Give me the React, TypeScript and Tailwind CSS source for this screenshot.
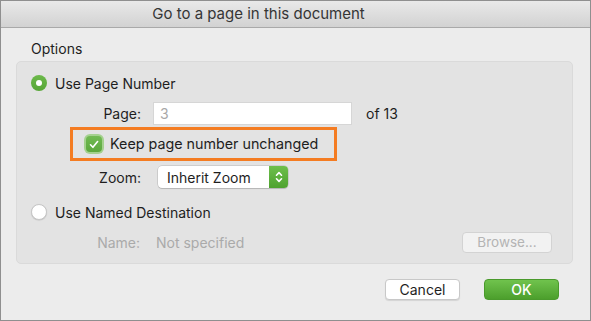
import React from 'react'

const font = { fontFamily: 'Inter, "Noto Sans", "Liberation Sans", sans-serif' }

function Radio({ on }: { on?: boolean }) {
  if (on) {
    return (
      <span className="w-[16px] h-[16px] rounded-full bg-gradient-to-b from-[#6cb94a] to-[#57a637] flex items-center justify-center shrink-0">
        <span className="w-[6px] h-[6px] rounded-full bg-white" />
      </span>
    )
  }
  return <span className="w-[16px] h-[16px] rounded-full bg-white border border-[#c6c6c6] shadow-[0_0.5px_1px_rgba(0,0,0,0.15)] shrink-0" />
}

function Stepper() {
  return (
    <svg width="8" height="12" viewBox="0 0 8 12" fill="none" stroke="white" strokeWidth="1.6" strokeLinecap="round" strokeLinejoin="round">
      <path d="M1.5 4.2 L4 1.6 L6.5 4.2" />
      <path d="M1.5 7.8 L4 10.4 L6.5 7.8" />
    </svg>
  )
}

export default function App() {
  return (
    <div className="w-[591px] h-[321px] flex flex-col bg-[#ececec] border border-[#8f8f8f] text-[#1e1e1e] overflow-hidden" style={font}>
      {/* title bar */}
      <div className="h-[27px] shrink-0 flex items-center justify-center pr-[74px] bg-gradient-to-b from-[#e9e9e9] to-[#d2d2d2] border-b border-[#a9a9a9] text-[15px] text-[#353535]">
        Go to a page in this document
      </div>

      <div className="flex flex-col pl-[15px] pr-[17px]">
        <div className="ml-[15px] mt-[12px] h-[18px] text-[14px] leading-[18px]">Options</div>

        {/* group box */}
        <div className="mt-[3px] h-[203px] rounded-[5px] bg-[#e3e3e3] border border-[#dadada] flex flex-col text-[14px]">
          <div className="mt-[10px] h-[22px] pl-[14px] flex items-center gap-[8px]">
            <Radio on />
            <span>Use Page Number</span>
          </div>

          <div className="mt-[7px] h-[24px] flex items-center">
            <span className="w-[124px] text-right">Page:</span>
            <div className="ml-[12px] w-[199px] h-[23px] bg-white border border-[#d6d6d6] flex items-center px-[6px] text-[#a8a8a8]">3</div>
            <span className="ml-[14px]">of 13</span>
          </div>

          <div className="mt-[2px] ml-[53px] w-[267px] h-[34px] border-[3px] border-[#f47c22] flex items-center pl-[11px] gap-[6px]">
            <span className="w-[20px] h-[20px] rounded-[6px] bg-[#a5d18f] flex items-center justify-center">
              <span className="w-[16px] h-[16px] rounded-[4px] bg-gradient-to-b from-[#72ba53] to-[#5ca83d] flex items-center justify-center">
                <svg width="10" height="9" viewBox="0 0 10 9" fill="none" stroke="white" strokeWidth="1.6" strokeLinecap="round" strokeLinejoin="round">
                  <path d="M1.5 4.8 L3.9 7.3 L8.6 1.5" />
                </svg>
              </span>
            </span>
            <span className="text-[14.3px]">Keep page number unchanged</span>
          </div>

          <div className="mt-[5px] h-[22px] flex items-center">
            <span className="w-[124px] text-right">Zoom:</span>
            <div className="ml-[17px] w-[130px] h-[22px] flex rounded-[4px] overflow-hidden bg-white shadow-[0_0_0_0.5px_rgba(0,0,0,0.18),0_1px_1px_rgba(0,0,0,0.12)]">
              <span className="flex-1 flex items-center pl-[9px]">Inherit Zoom</span>
              <span className="w-[19px] bg-gradient-to-b from-[#6ebf4c] to-[#4ea22f] flex items-center justify-center">
                <Stepper />
              </span>
            </div>
          </div>

          <div className="mt-[13px] h-[22px] pl-[14px] flex items-center gap-[8px]">
            <Radio />
            <span>Use Named Destination</span>
          </div>

          <div className="mt-[9px] h-[21px] flex items-center text-[#aaaaaa]">
            <span className="w-[123px] text-right">Name:</span>
            <span className="ml-[16px]">Not specified</span>
            <div className="ml-auto mr-[20px] w-[90px] h-[21px] rounded-[4px] bg-[#f2f2f2] border border-[#d3d3d3] flex items-center justify-center text-[13.5px] text-[#b4b4b4]">
              Browse...
            </div>
          </div>
        </div>

        {/* buttons */}
        <div className="mt-[15px] flex justify-end pr-[14px] gap-[24px] text-[14px]">
          <div className="w-[75px] h-[21px] rounded-[4px] bg-white border border-[#c8c8c8] shadow-[0_1px_1px_rgba(0,0,0,0.1)] flex items-center justify-center">
            Cancel
          </div>
          <div className="w-[75px] h-[21px] rounded-[4px] bg-gradient-to-b from-[#70c34d] to-[#4c9f2c] border border-[#4a9a2c] flex items-center justify-center text-white font-medium">
            OK
          </div>
        </div>
      </div>
    </div>
  )
}
